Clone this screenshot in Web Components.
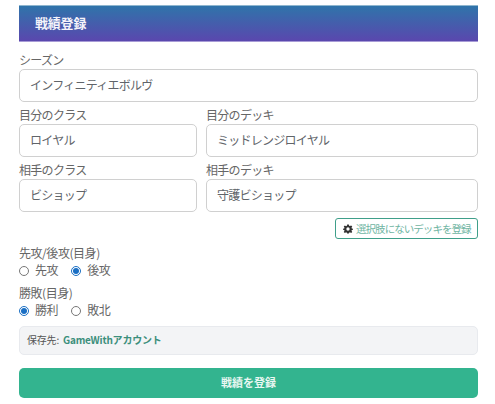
<!DOCTYPE html>
<html lang="ja">
<head>
<meta charset="utf-8">
<title>戦績登録</title>
<style>
  html, body { margin: 0; background: #fff; }
  body {
    font-family: "Noto Sans CJK JP", "Liberation Sans", sans-serif;
    font-size: 12px;
    color: #555;
  }
</style>
</head>
<body>

<template id="record-form-tpl">
  <style>
    :host { display: flex; flex-direction: column; padding: 5px 17px 0 19px; box-sizing: border-box; }
    ::slotted(*) { flex-shrink: 0; }
  </style>
  <slot></slot>
</template>

<template id="form-header-tpl">
  <style>
    :host {
      display: flex;
      align-items: center;
      height: 37px;
      padding: 0 0 3px 16px;
      box-sizing: border-box;
      color: #f4f3fa;
      font-size: 13px;
      font-weight: 700;
      letter-spacing: -.2px;
      background: linear-gradient(#2f74aa, #5a47ae);
      border-top: 1px solid #8fb6cf;
      border-bottom: 1px solid #a79bd6;
      margin-bottom: 8px;
    }
  </style>
  <slot></slot>
</template>

<template id="form-field-tpl">
  <style>
    :host { display: block; flex: var(--field-flex, 1 1 0); min-width: 0; }
    .label { height: 17px; line-height: 19px; letter-spacing: -.7px; color: #666; white-space: nowrap; }
    .box {
      height: 33px;
      margin-top: 2px;
      padding: 0 10px 3px;
      box-sizing: border-box;
      display: flex;
      align-items: center;
      border: 1px solid #d0d0d0;
      border-radius: 5px;
      background: #fff;
      color: #606469;
      letter-spacing: -.75px;
      white-space: nowrap;
    }
  </style>
  <div class="label"></div>
  <div class="box"><slot></slot></div>
</template>

<template id="field-row-tpl">
  <style>
    :host { display: flex; gap: 9px; margin-top: 3px; }
    ::slotted(:first-child) { --field-flex: 0 0 178px; }
  </style>
  <slot></slot>
</template>

<template id="add-deck-button-tpl">
  <style>
    :host {
      align-self: flex-end;
      display: inline-flex;
      align-items: center;
      gap: 3px;
      height: 21px;
      width: 143px;
      margin-top: 6px;
      padding: 0 0 1px 7px;
      box-sizing: border-box;
      border: 1px solid #3f9f8a;
      border-radius: 3px;
      color: #6fb5a3;
      font-size: 10.500px;
      letter-spacing: -.95px;
      white-space: nowrap;
    }
    svg { width: 10px; height: 10px; margin-top: 2px; fill: #333; flex: none; }
  </style>
  <svg viewBox="0 0 24 24"><path fill-rule="evenodd" d="M10 1h4l.7 3.2 2 .8L19.500 3.300 22.200 6 20.400 8.800l.8 2L24 11.500v2l-2.800.7-.8 2 1.800 2.800-2.700 2.700-2.800-1.800-2 .8L14 23h-4l-.7-2.300-2-.8-2.800 1.800L1.800 19l1.800-2.800-.8-2L0 13.500v-2l2.800-.7.800-2L1.800 6 4.500 3.300l2.800 1.800 2-.8zM12 8a4 4 0 1 0 0 8 4 4 0 0 0 0-8z"/></svg>
  <slot></slot>
</template>

<template id="radio-group-tpl">
  <style>
    :host { display: block; margin-top: var(--group-top, 0); }
    .title { height: 17px; line-height: 15px; letter-spacing: -.45px; color: #666; }
    .opts { display: flex; gap: 13px; height: 17px; align-items: center; }
  </style>
  <div class="title"></div>
  <div class="opts"><slot></slot></div>
</template>

<template id="radio-option-tpl">
  <style>
    :host { display: inline-flex; align-items: center; gap: 6px; color: #666; letter-spacing: -.4px; }
    .dot {
      width: 8px; height: 8px;
      border: 1px solid #777;
      border-radius: 50%;
      box-sizing: content-box;
      display: flex; align-items: center; justify-content: center;
      background: #fff;
    }
    :host([checked]) .dot { border-color: #1a6fc4; }
    :host([checked]) .dot::after {
      content: ""; width: 6px; height: 6px; border-radius: 50%; background: #1a6fc4;
    }
    .text { line-height: 15px; margin-bottom: 2px; }
  </style>
  <span class="dot"></span><span class="text"><slot></slot></span>
</template>

<template id="save-target-tpl">
  <style>
    :host {
      display: flex;
      align-items: center;
      height: 29px;
      margin-top: 7px;
      padding: 0 0 2px 7px;
      box-sizing: border-box;
      background: #f3f4f6;
      border: 1px solid #e8eaee;
      border-radius: 5px;
      font-size: 10px;
      color: #555;
      letter-spacing: -.2px;
      white-space: nowrap;
    }
    b { color: #3c8f7c; font-weight: 700; margin-left: 4px; }
  </style>
  保存先:<b><slot></slot></b>
</template>

<template id="submit-button-tpl">
  <style>
    :host {
      display: flex;
      align-items: center;
      justify-content: center;
      height: 30px;
      margin-top: 13px;
      padding-bottom: 2px;
      box-sizing: border-box;
      background: #33b48f;
      border-radius: 5px;
      color: #e9f7f2;
      font-size: 11px;
      font-weight: 700;
    }
  </style>
  <slot></slot>
</template>

<record-form>
  <form-header>戦績登録</form-header>
  <form-field label="シーズン">インフィニティエボルヴ</form-field>
  <field-row>
    <form-field label="目分のクラス">ロイヤル</form-field>
    <form-field label="目分のデッキ">ミッドレンジロイヤル</form-field>
  </field-row>
  <field-row>
    <form-field label="相手のクラス">ビショップ</form-field>
    <form-field label="相手のデッキ">守護ビショップ</form-field>
  </field-row>
  <add-deck-button>選択肢にないデッキを登録</add-deck-button>
  <radio-group title="先攻/後攻(目身)" style="--group-top: 6px">
    <radio-option>先攻</radio-option>
    <radio-option checked>後攻</radio-option>
  </radio-group>
  <radio-group title="勝敗(目身)" style="--group-top: 6px">
    <radio-option checked>勝利</radio-option>
    <radio-option>敗北</radio-option>
  </radio-group>
  <save-target>GameWithアカウント</save-target>
  <submit-button>戦績を登録</submit-button>
</record-form>

<script>
// all elements share the same setup: clone the template into an open shadow root
function define(name, onConnect) {
  const template = document.getElementById(name + '-tpl');
  customElements.define(name, class extends HTMLElement {
    constructor() {
      super();
      this.attachShadow({mode: 'open'}).appendChild(template.content.cloneNode(true));
    }
    connectedCallback() {
      if (onConnect) onConnect(this);
    }
  });
}

define('record-form');
define('form-header');
define('field-row');
define('add-deck-button');
define('radio-option');
define('save-target');
define('submit-button');
define('form-field', el => {
  el.shadowRoot.querySelector('.label').textContent = el.getAttribute('label');
});
define('radio-group', el => {
  el.shadowRoot.querySelector('.title').textContent = el.getAttribute('title');
  el.removeAttribute('title');
});
</script>
</body>
</html>
